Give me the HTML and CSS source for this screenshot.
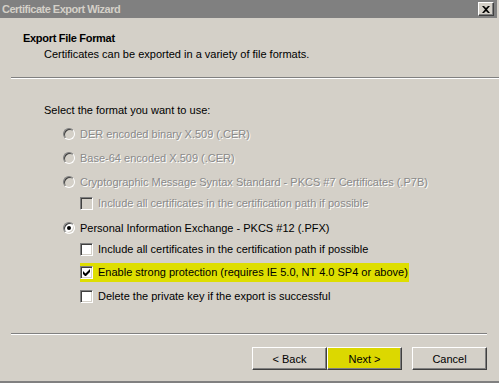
FILE: index.html
```html
<!DOCTYPE html>
<html lang="en">
<head>
<meta charset="UTF-8" />
<title>Certificate Export Wizard</title>
<link rel="stylesheet" href="styles.css">
</head>
<body>
  <div class="window">
    <div class="titlebar">
      <span class="title">Certificate Export Wizard</span>
      <button class="close" aria-label="Close">
        <svg width="8" height="7" viewBox="0 0 8 7"><path d="M0 0h2l2 2 2-2h2L5 3.5 8 7H6L4 5 2 7H0l3-3.5z" fill="#000"/></svg>
      </button>
    </div>

    <div class="header">
      <div class="header-title">Export File Format</div>
      <div class="header-sub">Certificates can be exported in a variety of file formats.</div>
    </div>
    <div class="rule"></div>

    <div class="content">
      <div class="prompt">Select the format you want to use:</div>
      <div class="options">
        <div class="row r1 disabled"><span class="radio"></span>DER encoded binary X.509 (.CER)</div>
        <div class="row r2 disabled"><span class="radio"></span>Base-64 encoded X.509 (.CER)</div>
        <div class="row r3 disabled"><span class="radio"></span>Cryptographic Message Syntax Standard - PKCS #7 Certificates (.P7B)</div>
        <div class="row r4 sub disabled"><span class="check"></span>Include all certificates in the certification path if possible</div>
        <div class="row r5"><span class="radio on"></span>Personal Information Exchange - PKCS #12 (.PFX)</div>
        <div class="row r6 sub"><span class="check"></span>Include all certificates in the certification path if possible</div>
        <div class="row r7 sub"><span class="mark"><span class="check"><svg width="7" height="7" viewBox="0 0 7 7"><path d="M0 2v3l2 2h1l4-4V0L2.5 4.5z" fill="#000"/></svg></span>Enable strong protection (requires IE 5.0, NT 4.0 SP4 or above)</span></div>
        <div class="row r8 sub"><span class="check"></span>Delete the private key if the export is successful</div>
      </div>
    </div>

    <div class="footer">
      <div class="rule short"></div>
      <div class="buttons">
        <button class="btn">&lt; Back</button>
        <button class="btn next">Next &gt;</button>
        <button class="btn cancel">Cancel</button>
      </div>
    </div>
  </div>
</body>
</html>
```

FILE: styles.css
```css
* {
  box-sizing: border-box;
}
body {
  margin: 0;
  background: #d4d0c8;
  font-family: "Liberation Sans", Arial, sans-serif;
  font-size: 11px;
  color: #000;
}
.window {
  width: 499px;
  height: 383px;
  display: flex;
  flex-direction: column;
  background: #d4d0c8;
  border-bottom: 2px solid #808080;
}

/* title bar */
.titlebar {
  height: 18px;
  background: #808080;
  display: flex;
  align-items: center;
  justify-content: space-between;
  padding: 0 3px 0 2px;
  margin-right: 2px;
}
.title {
  color: #d4d0c8;
  font-weight: bold;
  font-size: 11px;
  letter-spacing: -0.5px;
}
.close {
  width: 16px;
  height: 14px;
  padding: 0;
  background: #d4d0c8;
  border: 1px solid;
  border-color: #fff #404040 #404040 #fff;
  box-shadow: inset -1px -1px 0 #808080;
  display: flex;
  align-items: center;
  justify-content: center;
}

/* header */
.header {
  padding: 12px 0 0 23px;
  line-height: 16px;
}
.header-title {
  font-weight: bold;
  letter-spacing: -0.3px;
}
.header-sub {
  padding-left: 21px;
}
.rule {
  margin: 15px 0 0 11px;
  height: 2px;
  border-top: 1px solid #808080;
  border-bottom: 1px solid #fff;
}
.rule.short {
  margin: 0 12px 0 11px;
}

/* options */
.content {
  padding: 23px 0 0 44px;
  line-height: 16px;
}
.options {
  padding-left: 19px;
}
.row {
  display: flex;
  align-items: center;
  height: 16px;
  white-space: nowrap;
}
.r1 { margin-top: 8px; }
.r2 { margin-top: 8px; }
.r3 { margin-top: 8px; }
.r4 { margin-top: 5px; }
.r5 { margin-top: 9px; }
.r6 { margin-top: 5px; }
.r7 { margin-top: 7px; }
.r8 { margin-top: 8px; }
.row.sub {
  padding-left: 17px;
}
.row.disabled {
  color: #8a8a8a;
  text-shadow: 1px 1px 0 #fff;
}

.radio {
  width: 12px;
  height: 12px;
  border-radius: 50%;
  margin-right: 5px;
  border: 1px solid;
  border-color: #808080 #fff #fff #808080;
  box-shadow: inset 1px 1px 0 #404040, inset -1px -1px 0 #d4d0c8;
  background: #fff;
  display: flex;
  align-items: center;
  justify-content: center;
}
.disabled .radio {
  background: #d4d0c8;
}
.radio.on::after {
  content: "";
  width: 4px;
  height: 4px;
  border-radius: 50%;
  background: #000;
}

.check {
  width: 13px;
  height: 13px;
  margin-right: 5px;
  border: 1px solid;
  border-color: #808080 #fff #fff #808080;
  box-shadow: inset 1px 1px 0 #404040, inset -1px -1px 0 #d4d0c8;
  background: #fff;
  display: flex;
  align-items: center;
  justify-content: center;
  flex-shrink: 0;
}
.disabled .check {
  background: #d4d0c8;
}
.mark {
  display: flex;
  align-items: center;
  background: #dede00;
  height: 19px;
  padding-right: 1px;
}

/* footer */
.footer {
  margin-top: auto;
  padding-bottom: 11px;
}
.buttons {
  display: flex;
  justify-content: flex-end;
  padding: 12px 12px 0 0;
}
.btn {
  width: 75px;
  height: 23px;
  padding: 0;
  font-family: "Liberation Sans", Arial, sans-serif;
  font-size: 11px;
  color: #000;
  background: #d4d0c8;
  border: 1px solid;
  border-color: #fff #404040 #404040 #fff;
  box-shadow: inset -1px -1px 0 #808080;
}
.btn.next {
  background: #dcd800;
}
.btn.cancel {
  margin-left: 10px;
}
```
